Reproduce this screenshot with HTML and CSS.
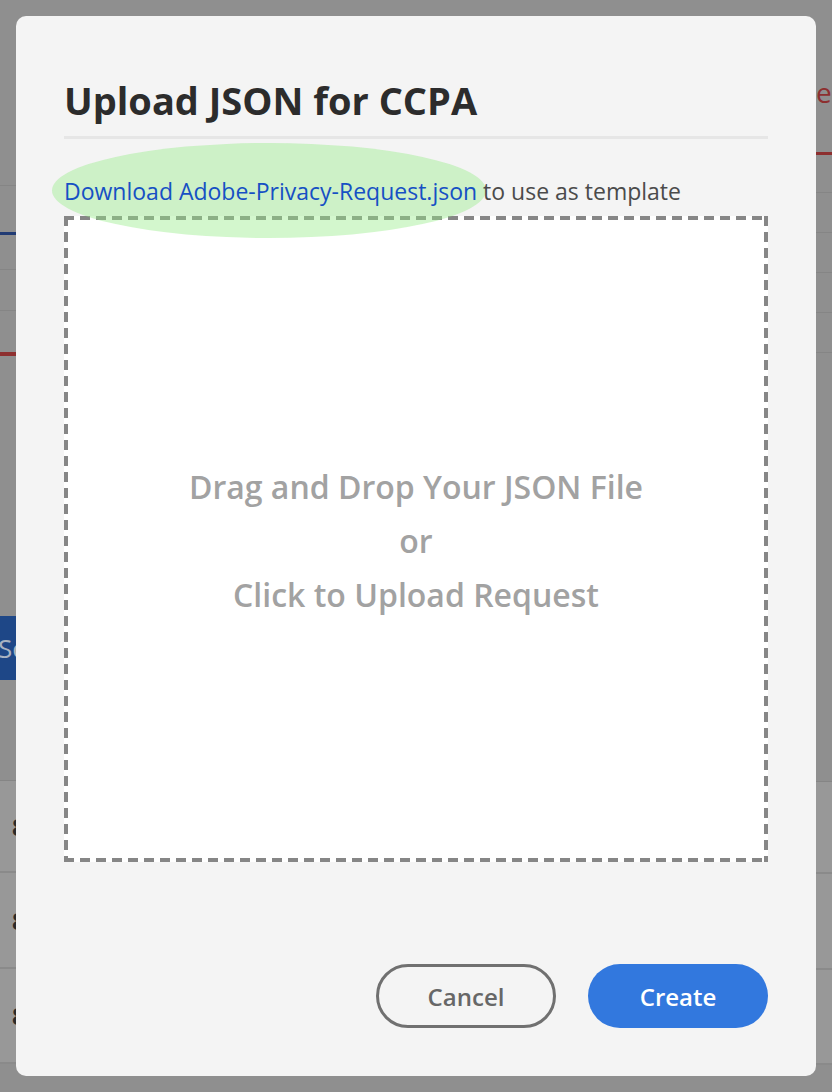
FILE: index.html
```html
<!DOCTYPE html>
<html lang="en">
<head>
  <meta charset="UTF-8">
  <meta name="viewport" content="width=device-width, initial-scale=1">
  <title>Upload JSON for CCPA</title>
  <link rel="stylesheet" href="styles.css">
</head>
<body>

  <!-- page behind the dialog, only the edges show -->
  <div class="page">
    <div class="side side-left">
      <div class="seg s-top"></div>
      <div class="seg s-blue"></div>
      <div class="seg s-plain s-h37"></div>
      <div class="seg s-plain s-h41"></div>
      <div class="seg s-red"></div>
      <div class="seg s-h260"></div>
      <div class="ghost-btn">Sc</div>
      <div class="seg s-plain s-h101"></div>
      <div class="row"><span>8</span></div>
      <div class="row row-tall"><span>8</span></div>
      <div class="row row-last"><span>8</span></div>
    </div>
    <div class="side side-right">
      <div class="ghost-title">e</div>
      <div class="seg s-red-r"></div>
      <div class="seg s-plain s-h38"></div>
      <div class="seg s-plain s-h40"></div>
      <div class="seg s-plain s-h40"></div>
      <div class="seg s-plain s-h40"></div>
      <div class="seg s-plain s-h40"></div>
      <div class="seg s-plain s-h429"></div>
      <div class="rows-light">
        <div class="row"></div>
        <div class="row row-tall"></div>
        <div class="row row-last"></div>
      </div>
    </div>
  </div>

  <div class="overlay">
    <div class="modal">
      <header class="modal-head">
        <h1>Upload JSON for CCPA</h1>
      </header>

      <p class="template">
        <span class="mark"></span>
        <span class="template-text"><a href="#">Download Adobe-Privacy-Request.json</a> to use as template</span>
      </p>

      <div class="dropzone">
        <p>Drag and Drop Your JSON File<br>or<br>Click to Upload Request</p>
      </div>

      <footer class="modal-foot">
        <button class="btn btn-quiet">Cancel</button>
        <button class="btn btn-cta">Create</button>
      </footer>
    </div>
  </div>

</body>
</html>
```

FILE: styles.css
```css
:root {
  --velo: #8f8f8f;
  --velo-claro: #989898;
  --linea: #858585;
  --rojo: #8d2f2f;
  --fondo-modal: #f4f4f4;
  --texto: #2c2c2c;
  --enlace: #1650c4;
  --gris-drop: #a2a2a2;
  --guion: #868686;
  --primario: #3278de;
}

* {
  box-sizing: border-box;
}

html,
body {
  height: 100%;
}

body {
  margin: 0;
  font-family: "Open Sans", "Noto Sans", sans-serif;
  background: var(--velo);
  overflow: hidden;
}

/* page behind */

.page {
  display: flex;
  justify-content: space-between;
  height: 100%;
}

.side {
  width: 60px;
  display: flex;
  flex-direction: column;
}

.seg {
  flex: none;
}

.s-plain {
  border-bottom: 1px solid var(--linea);
}

.s-top {
  height: 186px;
  border-bottom: 1px solid var(--linea);
}

.s-blue {
  height: 49px;
  border-bottom: 3px solid #213b74;
}

.s-h37 { height: 35px; }
.s-h38 { height: 38px; }
.s-h41 { height: 41px; }
.s-h40 { height: 40px; }
.s-h101 { height: 101px; }
.s-h260 { height: 260px; }
.s-h429 { height: 429px; }

.s-red {
  height: 45px;
  border-bottom: 4px solid var(--rojo);
}

.ghost-btn {
  height: 64px;
  background: #1e4787;
  color: #a9b3c2;
  font-size: 26px;
  line-height: 64px;
  text-indent: -2px;
}

.row {
  flex: none;
  height: 92px;
  border-bottom: 2px solid #8a8a8a;
  background: var(--velo-claro);
  display: flex;
  align-items: center;
}

.row-tall {
  height: 96px;
}

.row-last {
  height: 95px;
}

.row span {
  margin-left: 12px;
  font-weight: 700;
  font-size: 24px;
  color: #2a2a2a;
}

.ghost-title {
  flex: none;
  padding: 80px 0 48px;
  color: var(--rojo);
  font-size: 28px;
  line-height: 24px;
  text-indent: 44px;
}

.s-red-r {
  height: 3px;
  background: var(--rojo);
}

.rows-light {
  background: var(--velo-claro);
}

/* dialog */

.overlay {
  position: fixed;
  inset: 0;
  padding: 16px;
}

.modal {
  width: 800px;
  height: 1060px;
  background: var(--fondo-modal);
  border-radius: 10px;
  padding: 0 48px 48px;
  display: flex;
  flex-direction: column;
}

.modal-head {
  height: 123px;
  border-bottom: 3px solid #e6e6e6;
  display: flex;
  align-items: flex-end;
  padding-bottom: 13px;
}

h1 {
  margin: 0;
  font-size: 38px;
  line-height: 46px;
  font-weight: 700;
  color: var(--texto);
}

.template {
  position: relative;
  margin: 37px 0 10px;
  font-size: 23px;
  line-height: 30px;
  color: #4b4b4b;
  white-space: nowrap;
}

.template-text {
  position: relative;
  z-index: 2;
}

.template a {
  color: var(--enlace);
  text-decoration: none;
}

.mark {
  position: absolute;
  z-index: 1;
  left: -12px;
  top: -33px;
  width: 434px;
  height: 95px;
  border-radius: 50%;
  background: rgba(150, 235, 135, 0.42);
}

.dropzone {
  height: 646px;
  background:
    repeating-linear-gradient(90deg, var(--guion) 0 10px, transparent 10px 16px) top left / 100% 4px no-repeat,
    repeating-linear-gradient(90deg, var(--guion) 0 10px, transparent 10px 16px) bottom left / 100% 4px no-repeat,
    repeating-linear-gradient(180deg, var(--guion) 0 10px, transparent 10px 16px) top left / 4px 100% no-repeat,
    repeating-linear-gradient(180deg, var(--guion) 0 10px, transparent 10px 16px) top right / 4px 100% no-repeat,
    #fff;
  display: flex;
  align-items: center;
  justify-content: center;
  padding-top: 4px;
}

.dropzone p {
  margin: 0;
  text-align: center;
  font-size: 32px;
  line-height: 54px;
  font-weight: 600;
  color: var(--gris-drop);
}

.modal-foot {
  margin-top: auto;
  display: flex;
  justify-content: flex-end;
  gap: 32px;
}

.btn {
  width: 180px;
  height: 64px;
  border-radius: 32px;
  font-family: inherit;
  font-size: 24px;
  font-weight: 600;
  cursor: pointer;
}

.btn-quiet {
  background: transparent;
  border: 3px solid #707070;
  color: #676767;
}

.btn-cta {
  background: var(--primario);
  border: none;
  color: #fff;
}
```
